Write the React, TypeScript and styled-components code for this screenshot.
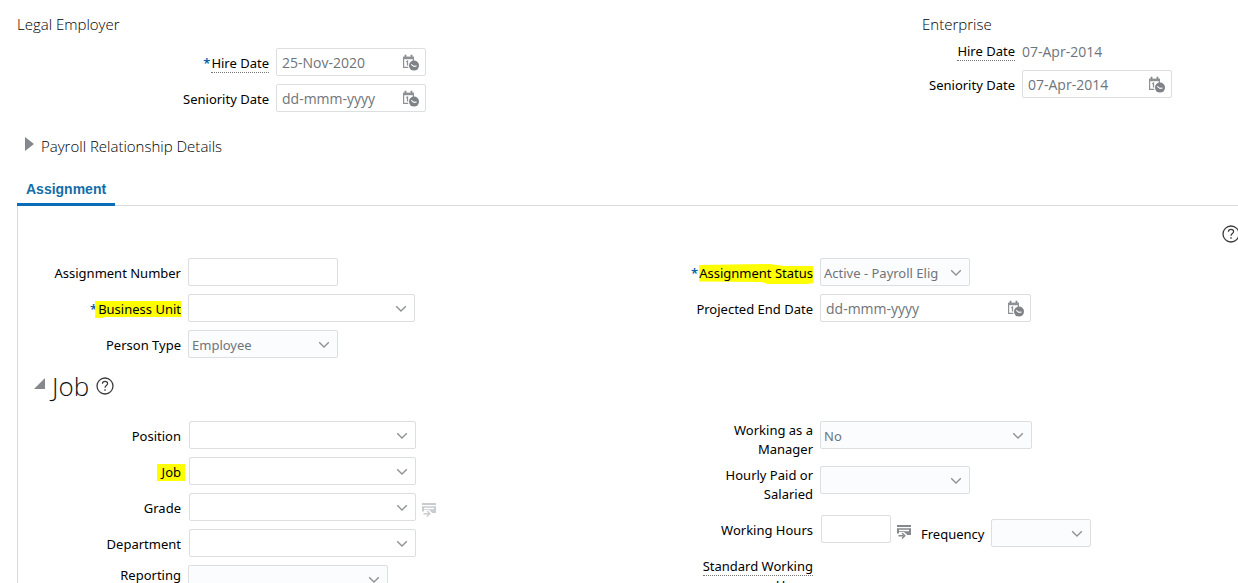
import React, { useState } from "react";
import styled, { createGlobalStyle, css } from "styled-components";

const GlobalStyle = createGlobalStyle`
  *, *::before, *::after { box-sizing: border-box; }
  body {
    margin: 0;
    background: #fff;
    color: #000;
    font: 13px/19px "Noto Sans", "Open Sans", sans-serif;
  }
  input, select, button { font: inherit; }
`;

const Page = styled.main`
  height: 100vh;
  overflow: hidden;
  padding: 14px 0 0 17px;
`;

const Summary = styled.div`
  display: grid;
  grid-template-columns: 905fr 316fr;
`;

const Heading = styled.h2<{ $gap: number }>`
  margin: 0 0 ${(p) => p.$gap}px;
  font: 300 15px/20px "Open Sans", sans-serif;
  color: #000;
`;

const Rows = styled.div<{ $gap?: number }>`
  display: flex;
  flex-direction: column;
  gap: ${(p) => p.$gap ?? 8}px;
`;

const Row = styled.div<{ $label: number; $gap?: number; $top?: number }>`
  display: grid;
  grid-template-columns: ${(p) => p.$label}px 1fr;
  column-gap: ${(p) => p.$gap ?? 7}px;
  align-items: start;
  padding-top: ${(p) => p.$top ?? 0}px;
`;

const Label = styled.label<{ $top?: number }>`
  padding-top: ${(p) => p.$top ?? 6}px;
  text-align: right;
`;

const Controls = styled.div`
  display: flex;
  align-items: flex-start;
`;

const Required = styled.span`
  margin-right: 1px;
  font-weight: 600;
  color: #0b5fa5;
`;

const Hint = styled.span`
  border-bottom: 1px dotted #777;
`;

const highlightShape = {
  unit: css`
    inset: 1px 0 1px -3px;
    clip-path: polygon(0 0, 100% 0, 100% 94%, 10% 94%, 9% 100%, 0 100%);
  `,
  status: css`
    inset: 0 0 -1px 0;
    clip-path: polygon(0 5%, 62% 0, 75% 10%, 100% 10%, 100% 96%, 94% 100%, 60% 100%, 55% 90%, 0 88%);
  `,
  job: css`
    inset: 1px -4px 1px -5px;
  `,
};

const Highlight = styled.mark<{ $shape: keyof typeof highlightShape }>`
  position: relative;
  z-index: 0;
  display: inline-block;
  background: none;
  color: inherit;
  &::before {
    content: "";
    position: absolute;
    z-index: -1;
    background: #ff0;
    ${(p) => highlightShape[p.$shape]}
  }
`;

const Box = styled.div<{ $width: number; $shaded?: boolean }>`
  position: relative;
  display: flex;
  align-items: center;
  width: ${(p) => p.$width}px;
  height: 28px;
  border: 1px solid #dcdfe1;
  border-radius: 2px;
  background: ${(p) => (p.$shaded ? "#fbfcfe" : "#fff")};
`;

const TextInput = styled.input`
  flex: 1;
  min-width: 0;
  height: 26px;
  padding: 1px 0 0 5px;
  border: 0;
  outline: 0;
  background: none;
  font: 14px/19px "Open Sans", sans-serif;
  color: #6f7479;
  &::placeholder {
    color: #6f7479;
    opacity: 1;
  }
`;

const Select = styled.select`
  width: 100%;
  height: 26px;
  padding: 2px 26px 0 3px;
  border: 0;
  outline: 0;
  appearance: none;
  background: none;
  color: #6f7479;
`;

const IconButton = styled.button<{ $gap?: number }>`
  display: flex;
  flex: none;
  padding: 0;
  margin: 0 ${(p) => p.$gap ?? 0}px;
  border: 0;
  background: none;
  color: inherit;
  cursor: pointer;
`;

const SelectArrow = styled.span`
  position: absolute;
  right: 7px;
  display: flex;
  pointer-events: none;
`;

const DateValue = styled.output`
  font: 14px/20px "Open Sans", sans-serif;
  color: #6f7479;
`;

const Disclosure = styled.button`
  display: flex;
  align-items: center;
  gap: 7px;
  margin: 24px 0 0 8px;
  padding: 0;
  border: 0;
  background: none;
  font: 300 15px/20px "Open Sans", sans-serif;
  color: #000;
  cursor: pointer;
`;

const Tabs = styled.div`
  display: flex;
  margin-top: 18px;
  height: 32px;
  border-bottom: 1px solid #d9dcde;
`;

const Tab = styled.button`
  height: 32px;
  padding: 0 9px;
  border: 0;
  border-bottom: 3px solid #0b6db7;
  background: none;
  font: bold 14px/16px "Liberation Sans", Arial, sans-serif;
  color: #146ca8;
  cursor: pointer;
`;

const Panel = styled.section`
  border-left: 1px solid #d9dcde;
  padding-top: 19px;
  height: 100%;
`;

const HelpBar = styled.div`
  display: flex;
  justify-content: flex-end;
  margin: 0 -2px 15px 0;
`;

const Columns = styled.div`
  display: grid;
  grid-template-columns: 632fr 588fr;
`;

const JobHeader = styled.div`
  display: flex;
  align-items: center;
  height: 34px;
  margin: 11px 0 18px 16px;
`;

const JobTitle = styled.h2`
  margin: 0 7px;
  font: 300 26px/34px "Open Sans", sans-serif;
  color: #111;
`;

const InlineField = styled.div`
  display: flex;
  align-items: flex-start;
  gap: 7px;
  padding: 4px 0 0 9px;
`;

const LookupButton = styled(IconButton)<{ $dim?: boolean }>`
  margin: 10px 0 0 6px;
  color: ${(p) => (p.$dim ? "#c9cccf" : "#85898d")};
`;

const CalendarIcon = () => (
  <svg width="18" height="20" viewBox="0 -2 18 20" aria-hidden="true">
    <path d="M3.5 0.8v3M9.5 0.8v3" stroke="#85898d" strokeWidth="1.8" />
    <path d="M1 2.6h11v2.6H1z" fill="#8d9194" />
    <path d="M1.6 5v8.4h4.6M11.4 5v2.2" fill="none" stroke="#8d9194" strokeWidth="1.2" />
    <path d="M4.2 7.7l1.3-.7v4.6" fill="none" stroke="#8d9194" strokeWidth="1.3" />
    <circle cx="12" cy="11.6" r="5" fill="#7f8387" />
    <path d="M9.2 10.4l2.8 2 2.6-.4" fill="none" stroke="#fff" strokeWidth="1.1" />
  </svg>
);

const Chevron = () => (
  <svg width="12" height="10" viewBox="0 -2 12 10" aria-hidden="true">
    <path d="M1.2 1.2L6 6l4.8-4.8" fill="none" stroke="#8d9194" strokeWidth="1.3" />
  </svg>
);

const HelpIcon = () => (
  <svg width="18" height="18" viewBox="0 0 18 18" fill="none" stroke="#3c3c3c" aria-hidden="true">
    <circle cx="9" cy="9" r="8" strokeWidth="1.3" />
    <path d="M6.4 6.7C6.5 5.2 7.5 4.4 9 4.4s2.6.9 2.6 2.2c0 1.9-2.6 2-2.6 4.2" strokeWidth="1.2" />
    <path d="M9 12.3v1.5" strokeWidth="1.4" />
  </svg>
);

const LookupIcon = () => (
  <svg width="15" height="14" viewBox="0 0 15 14" aria-hidden="true">
    <path d="M0 0h14v2H0z" fill="currentColor" />
    <path d="M0 3.2h14V10h-3.6L7 7H2v1.6H0zM2 4.8v1.4h10V4.8z" fill="currentColor" fillRule="evenodd" />
    <path d="M1.5 10.7h5M5 8l2.8 2.7L5 13.4" fill="none" stroke="currentColor" strokeWidth="1.4" />
  </svg>
);

const DateField = ({ id, width, value }: { id: string; width: number; value?: string }) => (
  <Box $width={width}>
    <TextInput id={id} defaultValue={value} placeholder="dd-mmm-yyyy" />
    <IconButton type="button" aria-label="Select date and time" $gap={5}>
      <CalendarIcon />
    </IconButton>
  </Box>
);

const ComboField = ({ id }: { id: string }) => (
  <Box $width={227}>
    <TextInput id={id} />
    <IconButton type="button" aria-label="Show choices" $gap={7}>
      <Chevron />
    </IconButton>
  </Box>
);

const SelectField = ({ id, width, value = "" }: { id: string; width: number; value?: string }) => (
  <Box $width={width} $shaded>
    <Select id={id} defaultValue={value}>
      <option value={value}>{value}</option>
    </Select>
    <SelectArrow>
      <Chevron />
    </SelectArrow>
  </Box>
);

export default function App() {
  const [payrollOpen, setPayrollOpen] = useState(false);
  return (
    <Page>
      <GlobalStyle />
      <Summary>
        <section>
          <Heading $gap={14}>Legal Employer</Heading>
          <Rows>
            <Row $label={252}>
              <Label htmlFor="le-hire">
                <Required>*</Required>
                <Hint>Hire Date</Hint>
              </Label>
              <DateField id="le-hire" width={150} value="25-Nov-2020" />
            </Row>
            <Row $label={252}>
              <Label htmlFor="le-seniority">Seniority Date</Label>
              <DateField id="le-seniority" width={150} />
            </Row>
          </Rows>
        </section>
        <section>
          <Heading $gap={8}>Enterprise</Heading>
          <Rows>
            <Row $label={93}>
              <Label htmlFor="ent-hire" $top={0}>
                <Hint>Hire Date</Hint>
              </Label>
              <DateValue id="ent-hire">07-Apr-2014</DateValue>
            </Row>
            <Row $label={93}>
              <Label htmlFor="ent-seniority">Seniority Date</Label>
              <DateField id="ent-seniority" width={150} value="07-Apr-2014" />
            </Row>
          </Rows>
        </section>
      </Summary>

      <Disclosure type="button" aria-expanded={payrollOpen} onClick={() => setPayrollOpen(!payrollOpen)}>
        <svg width="9" height="20" viewBox="0 0 9 20" aria-hidden="true">
          <path d="M0 1l9 7-9 7z" fill="#85898d" />
        </svg>
        Payroll Relationship Details
      </Disclosure>

      <Tabs role="tablist">
        <Tab type="button" role="tab" aria-selected="true">
          Assignment
        </Tab>
      </Tabs>

      <Panel>
        <HelpBar>
          <IconButton type="button" aria-label="Help">
            <HelpIcon />
          </IconButton>
        </HelpBar>

        <Columns>
          <Rows>
            <Row $label={163}>
              <Label htmlFor="number">Assignment Number</Label>
              <Box $width={150}>
                <TextInput id="number" />
              </Box>
            </Row>
            <Row $label={163}>
              <Label htmlFor="unit">
                <Required>*</Required>
                <Highlight $shape="unit">Business Unit</Highlight>
              </Label>
              <ComboField id="unit" />
            </Row>
            <Row $label={163}>
              <Label htmlFor="person">Person Type</Label>
              <SelectField id="person" width={150} value="Employee" />
            </Row>
          </Rows>
          <Rows>
            <Row $label={163}>
              <Label htmlFor="status">
                <Required>*</Required>
                <Highlight $shape="status">Assignment Status</Highlight>
              </Label>
              <SelectField id="status" width={150} value="Active - Payroll Elig" />
            </Row>
            <Row $label={163}>
              <Label htmlFor="end">Projected End Date</Label>
              <DateField id="end" width={211} />
            </Row>
          </Rows>
        </Columns>

        <JobHeader>
          <IconButton type="button" aria-label="Collapse Job">
            <svg width="11" height="18" viewBox="0 0 11 18" aria-hidden="true">
              <path d="M11 1v11H0z" fill="#85898d" />
            </svg>
          </IconButton>
          <JobTitle>Job</JobTitle>
          <IconButton type="button" aria-label="Job help">
            <HelpIcon />
          </IconButton>
        </JobHeader>

        <Columns>
          <Rows>
            <Row $label={163} $gap={8}>
              <Label htmlFor="position">Position</Label>
              <ComboField id="position" />
            </Row>
            <Row $label={163} $gap={8}>
              <Label htmlFor="job">
                <Highlight $shape="job">Job</Highlight>
              </Label>
              <ComboField id="job" />
            </Row>
            <Row $label={163} $gap={8}>
              <Label htmlFor="grade">Grade</Label>
              <Controls>
                <ComboField id="grade" />
                <LookupButton type="button" aria-label="Grade details" $dim>
                  <LookupIcon />
                </LookupButton>
              </Controls>
            </Row>
            <Row $label={163} $gap={8}>
              <Label htmlFor="department">Department</Label>
              <ComboField id="department" />
            </Row>
            <Row $label={163}>
              <Label htmlFor="reporting" $top={1}>
                Reporting
              </Label>
              <SelectField id="reporting" width={200} />
            </Row>
          </Rows>
          <Rows $gap={7}>
            <Row $label={163}>
              <Label htmlFor="manager" $top={0}>
                Working as a<br />
                Manager
              </Label>
              <SelectField id="manager" width={212} value="No" />
            </Row>
            <Row $label={163}>
              <Label htmlFor="paid" $top={0}>
                Hourly Paid or
                <br />
                Salaried
              </Label>
              <SelectField id="paid" width={150} />
            </Row>
            <Row $label={163} $gap={8} $top={4}>
              <Label htmlFor="hours">Working Hours</Label>
              <Controls>
                <Box $width={70}>
                  <TextInput id="hours" />
                </Box>
                <LookupButton type="button" aria-label="Working hours details">
                  <LookupIcon />
                </LookupButton>
                <InlineField>
                  <Label htmlFor="frequency">Frequency</Label>
                  <SelectField id="frequency" width={100} />
                </InlineField>
              </Controls>
            </Row>
            <Row $label={163} $top={3}>
              <Label as="span" $top={0}>
                <Hint>Standard Working</Hint>
                <br />
                <Hint>Hours</Hint>
              </Label>
            </Row>
          </Rows>
        </Columns>
      </Panel>
    </Page>
  );
}
